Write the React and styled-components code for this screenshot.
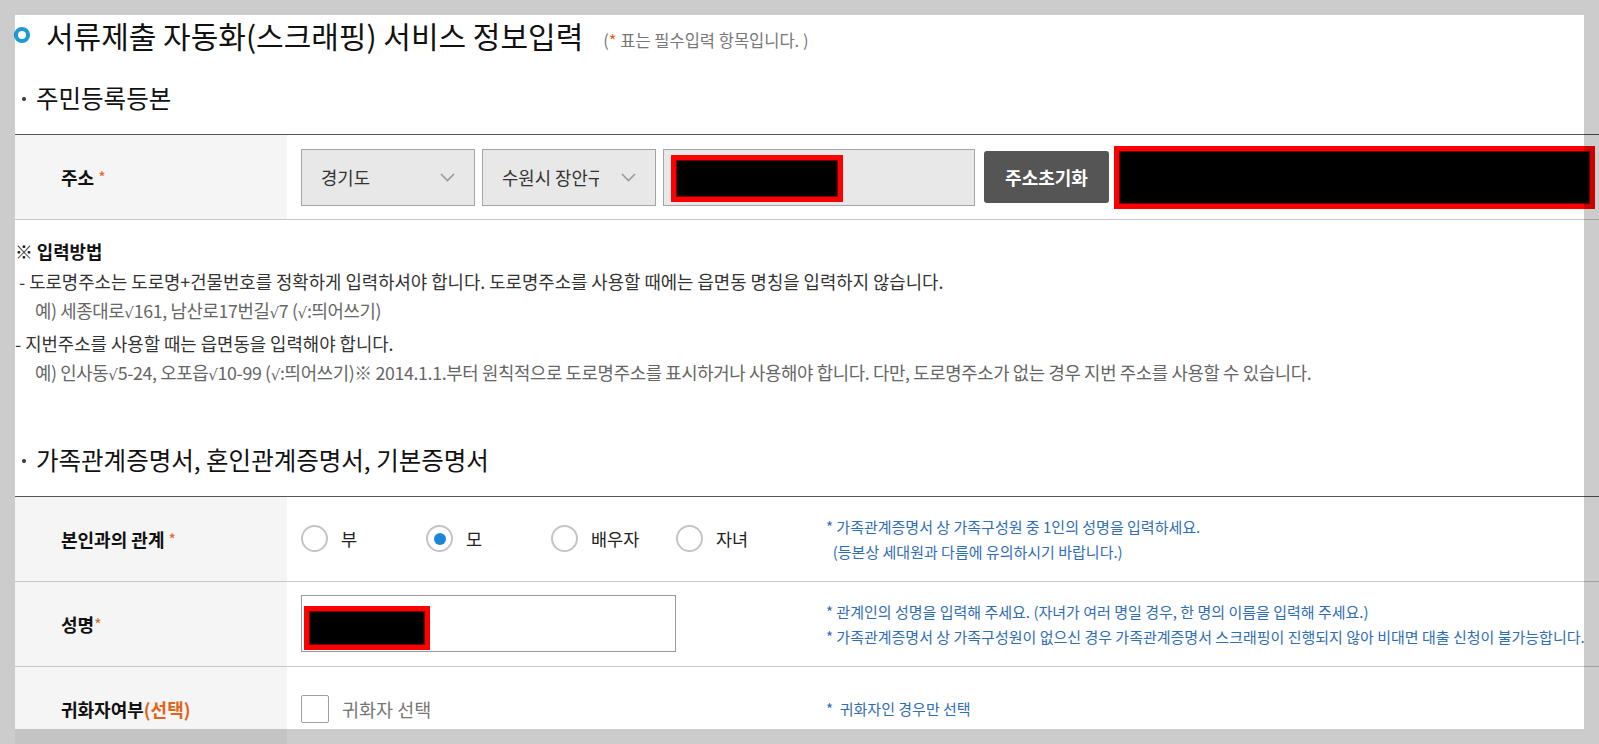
import React from 'react'
import styled, { createGlobalStyle } from 'styled-components'

const GlobalStyle = createGlobalStyle`
  html, body {
    margin: 0;
    padding: 0;
    background: #ffffff;
  }
  body {
    font-family: "Noto Sans CJK KR", "Noto Sans", sans-serif;
    color: #222;
    overflow: hidden;
  }
  * { box-sizing: border-box; }
`

const Page = styled.div`
  position: relative;
  width: 1599px;
  height: 744px;
  overflow: hidden;
  background: #fff;
  padding: 15px 0 0 15px;
`

const Frame = styled.div`
  position: absolute;
  inset: 0;
  border: 15px solid rgba(0, 0, 0, 0.2);
  pointer-events: none;
`

const TitleRow = styled.div`
  display: flex;
  align-items: center;
  height: 40px;
`

const TitleIcon = styled.span`
  flex: none;
  width: 16px;
  height: 16px;
  border-radius: 50%;
  border: 4px solid #1c9ad8;
  margin-left: -1px;
  margin-right: 16px;
`

const Title = styled.h1`
  margin: 0;
  font-size: 30px;
  font-weight: 400;
  line-height: 40px;
  color: #111;
`

const Note = styled.span`
  margin-left: 20px;
  padding-top: 9px;
  font-size: 16.5px;
  color: #777;
`

const Star = styled.span`
  color: #e8641b;
  font-weight: 400;
  font-size: ${p => p.$size || 'inherit'};
`

const SectionHeading = styled.h2`
  display: flex;
  align-items: center;
  margin: ${p => p.$top}px 0 21px;
  font-size: 24.5px;
  font-weight: 400;
  line-height: 30px;
  color: #111;
`

const Bullet = styled.span`
  width: 4px;
  height: 4px;
  border-radius: 50%;
  background: #333;
  margin: 2px 10px 0 7px;
`

const Table = styled.div`
  border-top: 1px solid #555;
`

const Row = styled.div`
  display: flex;
  height: 85px;
  border-bottom: 1px solid #c8c8c8;
`

const LabelCell = styled.div`
  flex: none;
  width: 272px;
  display: flex;
  align-items: center;
  padding-left: 46px;
  background: #f5f5f5;
  font-size: 18px;
  font-weight: 700;
  color: #111;
`

const ContentCell = styled.div`
  flex: 1;
  display: flex;
  align-items: center;
  padding-left: 14px;
`

const SplitCell = styled.div`
  flex: 1;
  display: grid;
  grid-template-columns: 525px 1fr;
  align-items: center;
  padding-left: 14px;
`

const Select = styled.div`
  flex: none;
  width: 174px;
  height: 57px;
  display: flex;
  align-items: center;
  padding-left: 19px;
  margin-right: 7px;
  background: #e8e8e8;
  border: 1px solid #a5a5a5;
  font-size: 17.8px;
  color: #333;
`

const SelectText = styled.span`
  flex: 1;
  overflow: hidden;
  white-space: nowrap;
`

const Chevron = styled.span`
  flex: none;
  width: 56px;
  display: flex;
  justify-content: flex-end;
  padding-right: 19px;
`

const AddrInput = styled.div`
  flex: none;
  width: 312px;
  height: 57px;
  display: flex;
  align-items: center;
  padding: 2px 0 0 7px;
  background: #e8e8e8;
  border: 1px solid #a5a5a5;
`

const Redacted = styled.span`
  flex: none;
  display: block;
  width: ${p => p.$w}px;
  height: ${p => p.$h}px;
  margin-left: ${p => p.$ml || 0}px;
  background: #000;
  border: 5px solid #ff0000;
  box-shadow: inset 0 0 0 1px #7a0000;
`

const ResetButton = styled.button`
  flex: none;
  width: 125px;
  height: 52px;
  margin-left: 9px;
  border: 0;
  border-radius: 3px;
  background: #555;
  color: #fff;
  font-family: inherit;
  font-size: 18px;
  font-weight: 700;
`

const InfoBlock = styled.div`
  padding-top: 17px;
`

const InfoLine = styled.div`
  font-size: 17.8px;
  line-height: 29.5px;
  padding-left: ${p => p.$indent || 0}px;
  color: ${p => (p.$muted ? '#666' : '#333')};
  letter-spacing: ${p => (p.$muted ? '-0.35px' : '0')};
  font-weight: ${p => (p.$bold ? 700 : 400)};
  white-space: nowrap;
  ${p => p.$bold && 'color: #111;'}
`

const Root = styled.span`
  font-family: "DejaVu Sans", sans-serif;
  font-size: 0.85em;
`

const RadioGroup = styled.div`
  display: flex;
  align-items: center;
`

const RadioOption = styled.label`
  width: 125px;
  display: flex;
  align-items: center;
  font-size: 17.5px;
  color: #222;
`

const RadioCircle = styled.span`
  flex: none;
  width: 27px;
  height: 27px;
  margin-right: 13px;
  border-radius: 50%;
  border: 2px solid #c4c4c4;
  background: #fff;
  display: grid;
  place-items: center;

  &::after {
    content: '';
    width: 12px;
    height: 12px;
    border-radius: 50%;
    background: ${p => (p.$checked ? '#1d86d6' : 'transparent')};
  }
`

const HelpText = styled.div`
  font-size: 15px;
  line-height: 25px;
  color: #2f6db5;
  white-space: nowrap;
`

const NameInput = styled.div`
  width: 375px;
  height: 57px;
  display: flex;
  align-items: flex-end;
  padding: 0 0 1px 2px;
  border: 1px solid #999;
  background: #fff;
`

const CheckOption = styled.label`
  display: flex;
  align-items: center;
  font-size: 18.5px;
  color: #777;
`

const CheckBox = styled.span`
  flex: none;
  width: 28px;
  height: 28px;
  margin-right: 13px;
  border: 1px solid #a0a0a0;
  border-radius: 2px;
  background: #fff;
`

const Optional = styled.span`
  color: #e0641b;
`

const ChevronIcon = () => (
  <svg width="15" height="9" viewBox="0 0 15 9">
    <polyline points="1,1 7.5,7.5 14,1" fill="none" stroke="#9a9a9a" strokeWidth="1.6" />
  </svg>
)

const R = () => <Root>√</Root>

const relations = ['부', '모', '배우자', '자녀']

export default function App() {
  return (
    <>
      <GlobalStyle />
      <Page>
        <TitleRow>
          <TitleIcon />
          <Title>서류제출 자동화(스크래핑) 서비스 정보입력</Title>
          <Note>(<Star>*</Star> 표는 필수입력 항목입니다. )</Note>
        </TitleRow>

        <SectionHeading $top={28}><Bullet />주민등록등본</SectionHeading>
        <Table>
          <Row>
            <LabelCell>주소&nbsp;<Star $size="16px">*</Star></LabelCell>
            <ContentCell>
              <Select>
                <SelectText>경기도</SelectText>
                <Chevron><ChevronIcon /></Chevron>
              </Select>
              <Select>
                <SelectText>수원시 장안구</SelectText>
                <Chevron><ChevronIcon /></Chevron>
              </Select>
              <AddrInput>
                <Redacted $w={172} $h={47} />
              </AddrInput>
              <ResetButton>주소초기화</ResetButton>
              <Redacted $w={481} $h={63} $ml={5} />
            </ContentCell>
          </Row>
        </Table>

        <InfoBlock>
          <InfoLine $bold>※ 입력방법</InfoLine>
          <InfoLine $indent={4}>- 도로명주소는 도로명+건물번호를 정확하게 입력하셔야 합니다. 도로명주소를 사용할 때에는 읍면동 명칭을 입력하지 않습니다.</InfoLine>
          <InfoLine $indent={20} $muted>예) 세종대로<R />161, 남산로17번길<R />7 (<R />:띄어쓰기)</InfoLine>
          <InfoLine>- 지번주소를 사용할 때는 읍면동을 입력해야 합니다.</InfoLine>
          <InfoLine $indent={20} $muted>예) 인사동<R />5-24, 오포읍<R />10-99 (<R />:띄어쓰기)※ 2014.1.1.부터 원칙적으로 도로명주소를 표시하거나 사용해야 합니다. 다만, 도로명주소가 없는 경우 지번 주소를 사용할 수 있습니다.</InfoLine>
        </InfoBlock>

        <SectionHeading $top={54}><Bullet />가족관계증명서, 혼인관계증명서, 기본증명서</SectionHeading>
        <Table>
          <Row>
            <LabelCell>본인과의 관계&nbsp;<Star $size="16px">*</Star></LabelCell>
            <SplitCell>
              <RadioGroup>
                {relations.map(r => (
                  <RadioOption key={r}>
                    <RadioCircle $checked={r === '모'} />
                    {r}
                  </RadioOption>
                ))}
              </RadioGroup>
              <div>
                <HelpText>* 가족관계증명서 상 가족구성원 중 1인의 성명을 입력하세요.</HelpText>
                <HelpText>&nbsp;&nbsp;(등본상 세대원과 다름에 유의하시기 바랍니다.)</HelpText>
              </div>
            </SplitCell>
          </Row>
          <Row>
            <LabelCell>성명<Star $size="16px">*</Star></LabelCell>
            <SplitCell>
              <NameInput>
                <Redacted $w={126} $h={44} />
              </NameInput>
              <div>
                <HelpText>* 관계인의 성명을 입력해 주세요. (자녀가 여러 명일 경우, 한 명의 이름을 입력해 주세요.)</HelpText>
                <HelpText>* 가족관계증명서 상 가족구성원이 없으신 경우 가족관계증명서 스크래핑이 진행되지 않아 비대면 대출 신청이 불가능합니다.</HelpText>
              </div>
            </SplitCell>
          </Row>
          <Row>
            <LabelCell>귀화자여부<Optional>(선택)</Optional></LabelCell>
            <SplitCell>
              <CheckOption>
                <CheckBox />
                귀화자 선택
              </CheckOption>
              <HelpText>*&nbsp;&nbsp;귀화자인 경우만 선택</HelpText>
            </SplitCell>
          </Row>
        </Table>
        <Frame />
      </Page>
    </>
  )
}
